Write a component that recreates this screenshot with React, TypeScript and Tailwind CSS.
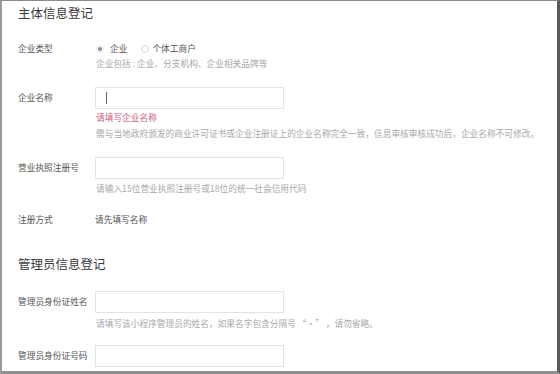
const font = { fontFamily: '"Noto Sans CJK SC", "Noto Sans", sans-serif' }

function Row({ label, children }: { label: string; children: React.ReactNode }) {
  return (
    <div className="flex items-center">
      <div className="w-[77px] shrink-0 text-[8.7px] leading-[14px] text-[#555]">{label}</div>
      {children}
    </div>
  )
}

function Input({ cursor }: { cursor?: boolean }) {
  return (
    <div className="flex h-[22px] w-[189px] items-center border border-[#e3e3e3] bg-white pl-[10px]">
      {cursor && <div className="h-[12px] w-px bg-[#666]" />}
    </div>
  )
}

function Hint({ children, className = '' }: { children: React.ReactNode; className?: string }) {
  return (
    <div className={`ml-[78px] text-[8.7px] leading-[14px] text-[#a8a8a8] whitespace-nowrap ${className}`}>
      {children}
    </div>
  )
}

export default function App() {
  return (
    <div
      style={font}
      className="h-[374px] w-[560px] overflow-hidden border-t border-l-2 border-r-[3px] border-b-[3px] border-t-[#8a8a8a] border-l-[#9a9a9a] border-r-[#5a5a5a] border-b-[#8f8f8f] bg-white pl-4"
    >
      <h2 className="mt-[2px] h-[20px] text-[12.5px] leading-[20px] text-[#3a3a3a]">主体信息登记</h2>

      <div className="mt-[19px]">
        <Row label="企业类型">
          <div className="flex items-center text-[8.7px] leading-[14px] text-[#555]">
            <span className="ml-px flex h-[8px] w-[8px] items-center justify-center rounded-full border border-[#e6e6e6]">
              <span className="h-[4px] w-[4px] rounded-full bg-[#8a8a8a]" />
            </span>
            <span className="ml-[6px]">企业</span>
            <span className="ml-[14px] h-[8px] w-[8px] rounded-full border border-[#d8d8d8]" />
            <span className="ml-[3px]">个体工商户</span>
          </div>
        </Row>
        <Hint className="mt-px">企业包括 : 企业、分支机构、企业相关品牌等</Hint>
      </div>

      <div className="mt-[16px]">
        <Row label="企业名称">
          <Input cursor />
        </Row>
        <div className="mt-[2px] ml-[78px] text-[8.7px] leading-[14px] text-[#c9627a]">请填写企业名称</div>
        <Hint className="mt-[2px]">
          需与当地政府颁发的商业许可证书或企业注册证上的企业名称完全一致，信息审核审核成功后，企业名称不可修改。
        </Hint>
      </div>

      <div className="mt-[16px]">
        <Row label="营业执照注册号">
          <Input />
        </Row>
        <Hint className="mt-[3px]">请输入15位营业执照注册号或18位的统一社会信用代码</Hint>
      </div>

      <div className="mt-[17px]">
        <Row label="注册方式">
          <div className="text-[8.7px] leading-[14px] text-[#555]">请先填写名称</div>
        </Row>
      </div>

      <h2 className="mt-[27px] h-[20px] text-[12.5px] leading-[20px] text-[#3a3a3a]">管理员信息登记</h2>

      <div className="mt-[17px]">
        <Row label="管理员身份证姓名">
          <Input />
        </Row>
        <Hint className="mt-[4px]">请填写该小程序管理员的姓名，如果名字包含分隔号 “·” ，请勿省略。</Hint>
      </div>

      <div className="mt-[14px]">
        <Row label="管理员身份证号码">
          <Input />
        </Row>
      </div>
    </div>
  )
}
